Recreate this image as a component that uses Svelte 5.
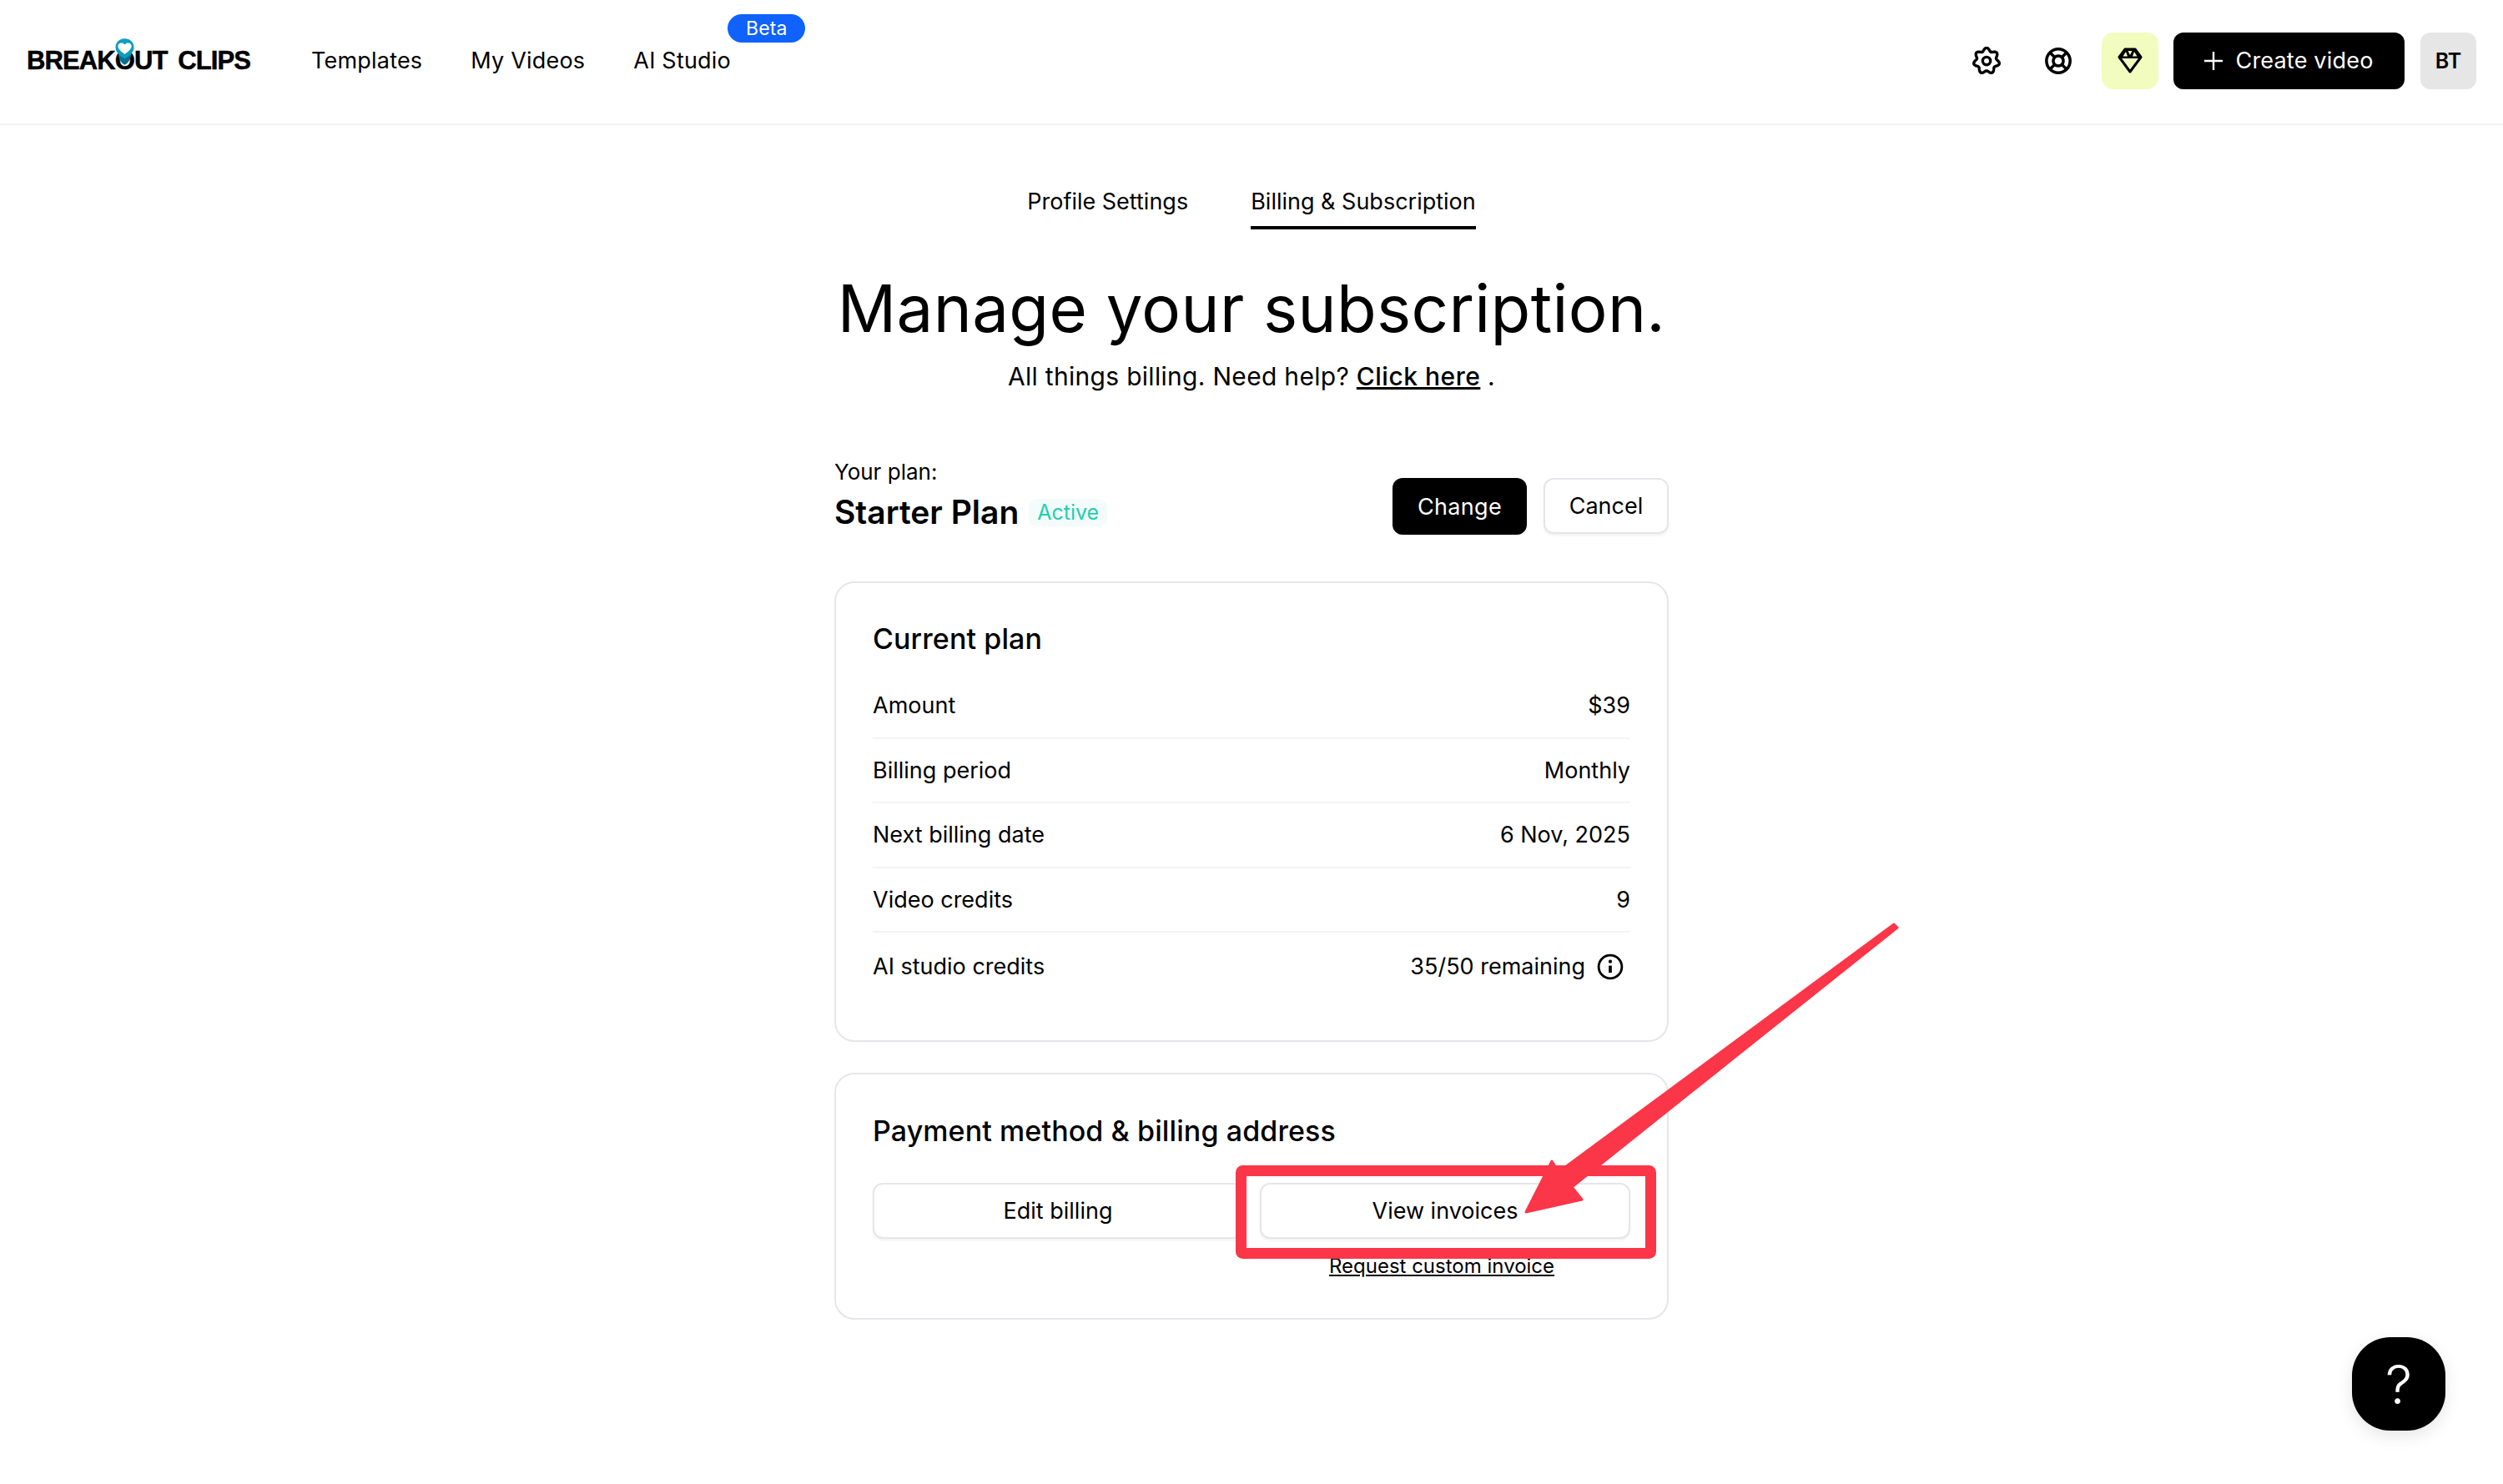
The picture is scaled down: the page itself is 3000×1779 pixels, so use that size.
<script lang="ts">
  const navItems = ['Templates', 'My Videos', 'AI Studio'];
  const rows = [
    { label: 'Amount', value: '$39' },
    { label: 'Billing period', value: 'Monthly' },
    { label: 'Next billing date', value: '6 Nov, 2025' },
    { label: 'Video credits', value: '9' },
    { label: 'AI studio credits', value: '35/50 remaining', info: true }
  ];

  // scalloped outline of the settings gear, seven lobes with one on top
  function gearOutline() {
    const pts = [];
    for (let i = 0; i < 140; i++) {
      const a = (i / 140) * Math.PI * 2;
      const r = 9.7 + 1.35 * Math.cos(7 * a);
      pts.push(`${(12 + r * Math.sin(a)).toFixed(2)} ${(12 - r * Math.cos(a)).toFixed(2)}`);
    }
    return 'M' + pts.join('L') + 'Z';
  }
  const gearPath = gearOutline();
</script>

<div class="page">
  <header class="topbar">
    <div class="left">
      <a class="logo" href="#top">BREAK<span class="logo-o">O<svg class="pin" viewBox="0 0 24 34" aria-hidden="true"><path d="M4 18C4 26 8 31 12 33C16 31 20 26 20 18Z" fill="#0b6f88"/><path d="M12 0C18.500 0 23.500 4.500 23.500 11C23.500 17 18 22 12 25C6 22 .5 17 .5 11C.5 4.500 5.500 0 12 0Z" fill="#0f9cc0"/><path d="M12 19.500C7 16 3.500 13 3.500 9.500C3.500 5 9.500 4 12 7.500C14.500 4 20.500 5 20.500 9.500C20.500 13 17 16 12 19.500Z" fill="#fff"/></svg></span>UT CLIPS</a>
      <nav class="nav">
        {#each navItems as item}
          <a href="#top" class="nav-item">
            {item}
            {#if item === 'AI Studio'}<span class="beta">Beta</span>{/if}
          </a>
        {/each}
      </nav>
    </div>
    <div class="right">
      <button class="icon-btn" aria-label="Settings">
        <svg viewBox="0 0 24 24" width="34" height="34" fill="none" stroke="#000" stroke-width="2.400" stroke-linejoin="round"><path d={gearPath}/><circle cx="12" cy="12" r="3.300"/></svg>
      </button>
      <button class="icon-btn" aria-label="Support">
        <svg viewBox="0 0 24 24" width="34" height="34" fill="none" stroke="#000" stroke-width="2.500"><circle cx="12" cy="12" r="10"/><circle cx="12" cy="12" r="4.300"/><path d="M5 5l4 4M19 5l-4 4M5 19l4-4M19 19l-4-4"/></svg>
      </button>
      <button class="gem-btn" aria-label="Upgrade">
        <svg viewBox="0 0 30 31" width="30" height="31" aria-hidden="true"><path d="M9 2H21L28 11.500L15 29L2 11.500Z" fill="none" stroke="#000" stroke-width="3" stroke-linejoin="round"/><path d="M9 2H21L28 11.500V13H2V11.500Z" fill="#000"/><path d="M6.500 10.500L10 5L12 10.500ZM12.500 4H17.500L15 9ZM23.500 10.500L20 5L18 10.500Z" fill="#f2fcbf"/></svg>
      </button>
      <button class="create-btn">
        <svg viewBox="0 0 22 22" width="22" height="22" fill="none" stroke="#fff" stroke-width="2.400"><path d="M11 0V22M0 11H22"/></svg>
        Create video
      </button>
      <div class="avatar">BT</div>
    </div>
  </header>

  <main class="main">
    <div class="tabs">
      <a href="#top" class="tab">Profile Settings</a>
      <a href="#top" class="tab active">Billing &amp; Subscription</a>
    </div>

    <h1>Manage your subscription.</h1>
    <p class="sub">All things billing. Need help? <a href="#top">Click here</a> .</p>

    <section class="plan">
      <div>
        <p class="plan-label">Your plan:</p>
        <div class="plan-name">
          <strong>Starter Plan</strong>
          <span class="active-pill">Active</span>
        </div>
      </div>
      <div class="plan-actions">
        <button class="btn dark">Change</button>
        <button class="btn ghost">Cancel</button>
      </div>
    </section>

    <section class="card current">
      <h2>Current plan</h2>
      {#each rows as row}
        <div class="row">
          <span>{row.label}</span>
          <span class="value">
            {row.value}
            {#if row.info}
              <svg viewBox="0 0 24 24" width="34" height="34" fill="none" stroke="#000" stroke-width="2"><circle cx="12" cy="12" r="9.800"/><path d="M12 11v6" stroke-width="2.600"/><circle cx="12" cy="7.500" r="1.500" fill="#000" stroke="none"/></svg>
            {/if}
          </span>
        </div>
      {/each}
    </section>

    <section class="card payment">
      <h2>Payment method &amp; billing address</h2>
      <div class="pay-grid">
        <button class="btn ghost wide">Edit billing</button>
        <div class="invoice-col">
          <button class="btn ghost wide">View invoices</button>
          <a href="#top" class="request">Request custom invoice</a>
        </div>
      </div>
    </section>
  </main>

  <button class="help" aria-label="Help">?</button>

  <!-- red markup drawn on top of the screenshot -->
  <svg class="markup" viewBox="0 0 3000 1779" aria-hidden="true">
    <rect x="1487.500" y="1403.500" width="491" height="99" rx="2" fill="none" stroke="#fb3648" stroke-width="13"/>
    <path d="M2270 1108L2274 1112L1884 1423L1896 1438L1829 1453L1860 1392L1868 1405Z" fill="#fb3648" stroke="#fb3648" stroke-width="3" stroke-linejoin="round"/>
  </svg>
</div>

<style>
  :global(body) { margin: 0; background: #fff; }
  .page {
    position: relative;
    width: 3000px;
    height: 1779px;
    overflow: hidden;
    font-family: Inter, "Noto Sans", sans-serif;
    color: #000;
    background: #fff;
  }
  a { color: inherit; text-decoration: none; }
  button { font-family: inherit; cursor: pointer; }

  .topbar {
    display: flex;
    justify-content: space-between;
    align-items: center;
    box-sizing: border-box;
    height: 150px;
    padding: 0 32px 3px;
    border-bottom: 2px solid #f4f4f4;
  }
  .left { display: flex; align-items: center; }
  .logo {
    width: 265px;
    font-family: "Liberation Sans", sans-serif;
    font-weight: 700;
    font-size: 31px;
    letter-spacing: -0.9px;
    word-spacing: 5px;
    -webkit-text-stroke: 0.5px #000;
    white-space: nowrap;
  }
  .logo-o { position: relative; }
  .pin { position: absolute; left: 0; top: -9px; width: 23px; height: 33px; }
  .nav { display: flex; gap: 58px; margin-left: 76px; }
  .nav-item { position: relative; font-size: 27px; font-weight: 400; letter-spacing: 0.2px; }
  .beta {
    position: absolute;
    left: 113px;
    top: -39px;
    box-sizing: border-box;
    width: 93px;
    height: 34px;
    border-radius: 17px;
    background: #0f62fe;
    color: #fff;
    font-size: 23px;
    line-height: 34px;
    text-align: center;
  }
  .right { display: flex; align-items: center; }
  .icon-btn {
    display: grid;
    place-items: center;
    width: 68px;
    height: 68px;
    margin-right: 18px;
    padding: 0;
    border: 0;
    background: none;
  }
  .gem-btn {
    display: grid;
    place-items: center;
    width: 68px;
    height: 68px;
    padding: 0;
    border: 0;
    border-radius: 14px;
    background: #f2fcbf;
  }
  .create-btn {
    display: flex;
    align-items: center;
    justify-content: center;
    gap: 15px;
    width: 277px;
    height: 68px;
    margin: 0 19px 0 18px;
    border: 0;
    border-radius: 12px;
    background: #000;
    color: #fff;
    font-size: 27px;
    letter-spacing: 0.2px;
  }
  .avatar {
    display: grid;
    place-items: center;
    width: 67px;
    height: 68px;
    border-radius: 12px;
    background: #e6e6e6;
    font-size: 25px;
    font-weight: 600;
  }

  .main {
    display: flex;
    flex-direction: column;
    align-items: center;
    width: 1000px;
    margin: 0 auto;
  }
  .tabs { display: flex; gap: 75px; margin-top: 72px; }
  .tab { padding-bottom: 9px; font-size: 27px; line-height: 40px; border-bottom: 4px solid transparent; }
  .tab.active { border-bottom-color: #000; }
  h1 { margin: 47px 0 0; font-size: 78px; line-height: 96px; font-weight: 400; letter-spacing: 0.35px; white-space: nowrap; }
  .sub { margin: 11px 0 0; font-size: 30px; line-height: 44px; letter-spacing: 0.3px; }
  .sub a { font-weight: 500; letter-spacing: 0.5px; text-decoration: underline; }

  .plan {
    display: flex;
    justify-content: space-between;
    align-items: flex-start;
    width: 1000px;
    margin-top: 75px;
  }
  .plan-label { margin: 0; font-size: 26px; line-height: 36px; }
  .plan-name { display: flex; align-items: center; gap: 12px; margin-top: 8px; }
  .plan-name strong { font-size: 39px; line-height: 44px; font-weight: 600; }
  .active-pill {
    padding: 0 10px;
    height: 33px;
    border-radius: 10px;
    background: #f3fcfa;
    color: #1fcfb0;
    font-size: 25px;
    line-height: 33px;
  }
  .plan-actions { display: flex; gap: 20px; margin-top: 25px; }
  .btn {
    box-sizing: border-box;
    height: 67px;
    border-radius: 12px;
    font-size: 27px;
  }
  .btn.dark { width: 161px; height: 68px; border: 0; background: #000; color: #fff; letter-spacing: 0.3px; }
  .btn.ghost { width: 150px; border: 2px solid #e6e6ea; background: #fff; color: #000; box-shadow: 0 2px 3px rgba(0, 0, 0, 0.06); }
  .btn.wide { width: 100%; }

  .card {
    box-sizing: border-box;
    width: 1000px;
    border: 2px solid #e6e6ea;
    border-radius: 24px;
    padding: 0 44px;
  }
  .current { height: 552px; margin-top: 56px; padding-top: 44px; }
  h2 { margin: 0; font-size: 34px; line-height: 46px; font-weight: 500; letter-spacing: 0.1px; }
  .row {
    display: flex;
    justify-content: space-between;
    align-items: center;
    height: 77.500px;
    border-bottom: 2px solid #f4f4f6;
    box-sizing: border-box;
    font-size: 27px;
  }
  .current h2 { margin-bottom: 19px; }
  .row:last-child { border-bottom: 0; height: 81px; }
  .value { display: flex; align-items: center; gap: 13px; }
  .value svg { margin-right: 7px; }

  .payment { height: 296px; margin-top: 37px; padding-top: 45px; }
  .pay-grid { display: grid; grid-template-columns: 1fr 1fr; gap: 20px; margin-top: 39px; }
  .invoice-col { display: flex; flex-direction: column; align-items: center; }
  .request { margin: 18px 8px 0 0; font-size: 24px; line-height: 30px; text-decoration: underline; }

  .help {
    position: absolute;
    left: 2819px;
    top: 1603px;
    width: 112px;
    height: 112px;
    padding: 0;
    border: 0;
    border-radius: 46px;
    background: #000;
    color: #fff;
    font-size: 64px;
    font-weight: 300;
    box-shadow: 0 6px 20px rgba(0, 0, 0, 0.1);
  }
  .markup {
    position: absolute;
    inset: 0;
    width: 3000px;
    height: 1779px;
    pointer-events: none;
  }
</style>
